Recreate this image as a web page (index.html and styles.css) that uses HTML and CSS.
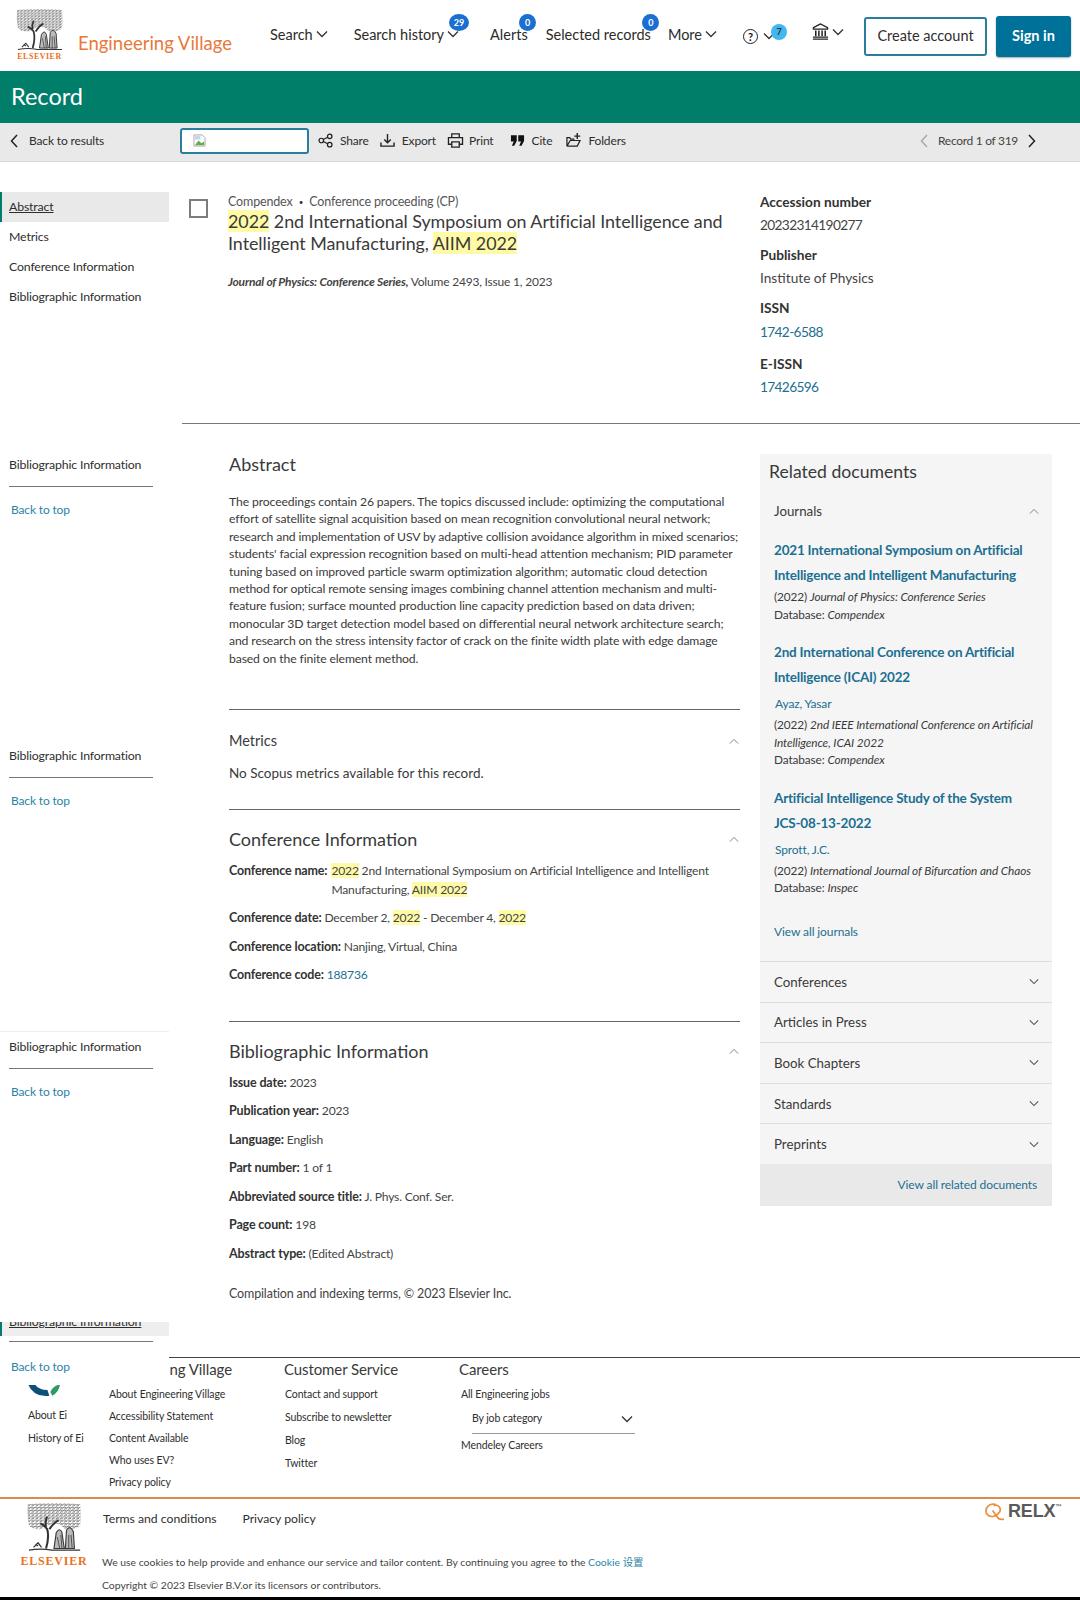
FILE: index.html
```html
<!DOCTYPE html>
<html lang="en">
<head>
<meta charset="utf-8">
<title>Engineering Village - Record</title>
<link rel="stylesheet" href="styles.css">
</head>
<body>
<svg class="defs" width="0" height="0" aria-hidden="true">
  <defs>
    <symbol id="chev-d" viewBox="0 0 12 8"><path d="M1 1.5 6 6.5 11 1.5" fill="none" stroke="currentColor" stroke-width="1.3"/></symbol>
    <symbol id="chev-u" viewBox="0 0 12 8"><path d="M1 6.5 6 1.5 11 6.5" fill="none" stroke="currentColor" stroke-width="1.1"/></symbol>
    <symbol id="chev-l" viewBox="0 0 8 14"><path d="M7 1 1.5 7 7 13" fill="none" stroke="currentColor" stroke-width="1.5"/></symbol>
    <symbol id="chev-r" viewBox="0 0 8 14"><path d="M1 1 6.5 7 1 13" fill="none" stroke="currentColor" stroke-width="1.5"/></symbol>
    <pattern id="leaf" width="3.6" height="2.8" patternUnits="userSpaceOnUse">
      <path d="M0 1.2 Q.8 0 1.6 1 T3.6 1 M.6 2.500 Q1.600 1.700 2.800 2.500" fill="none" stroke="#3f3f3f" stroke-width=".6"/>
    </pattern>
    <symbol id="tree" viewBox="0 0 48 44">
      <path d="M1 1 Q10 0 24 0 Q38 0 47 1 Q48 12 47 20 Q42 24 34 23 L29 19 Q22 16 16 22 Q8 25 2 20 Q0 10 1 1Z" fill="url(#leaf)"/>
      <path d="M17 40 Q20 30 18 23 Q16 20 12 18 M20 23 Q24 17 28 15 M17 21 Q16 16 18 12" fill="none" stroke="#333" stroke-width="1.8"/>
      <path d="M24 40 L26 26 Q29 21 31 26 L33 40Z M34 40 L35 24 Q38 19 41 25 L42 40Z" fill="#bbb" stroke="#3a3a3a" stroke-width="1"/>
      <path d="M27 30 29 40 M30 28 31 40 M37 28 37 40 M39 28 40 40" stroke="#444" stroke-width=".8"/>
      <path d="M2 41.500 Q12 39.500 22 41.500 L47 41.500 M6 39 10 35 13 39 M8 36 10 38" fill="none" stroke="#333" stroke-width="1.1"/>
    </symbol>
  </defs>
</svg>

<header class="topbar">
  <a class="brand">
    <span class="logo">
      <svg class="tree" viewBox="0 0 48 44"><use href="#tree"/></svg>
      <span class="wordmark">ELSEVIER</span>
    </span>
    <span class="brand-name">Engineering Village</span>
  </a>
  <nav class="mainnav">
    <a class="nav-item nav-search">Search<svg class="ch"><use href="#chev-d"/></svg></a>
    <a class="nav-item nav-history">Search history<svg class="ch"><use href="#chev-d"/></svg><span class="badge badge-lg">29</span></a>
    <a class="nav-item nav-alerts">Alerts<span class="badge">0</span></a>
    <a class="nav-item nav-selected">Selected records<span class="badge">0</span></a>
    <a class="nav-item nav-more">More<svg class="ch"><use href="#chev-d"/></svg></a>
    <a class="nav-item nav-help"><span class="help">?</span><svg class="ch"><use href="#chev-d"/></svg><span class="badge badge-sky">7</span></a>
    <a class="nav-item nav-bank">
      <svg class="bank" viewBox="0 0 18 18"><path d="M9 1 1.500 5V6.500h15V5Z" fill="none" stroke="#222" stroke-width="1.400"/><path d="M4 8v6M7.300 8v6M10.700 8v6M14 8v6" stroke="#222" stroke-width="1.600"/><path d="M1 15h16M1 17h16" stroke="#222" stroke-width="1.400"/></svg>
      <svg class="ch"><use href="#chev-d"/></svg>
    </a>
  </nav>
  <div class="auth">
    <a class="btn btn-outline">Create account</a>
    <a class="btn btn-solid">Sign in</a>
  </div>
</header>

<div class="band">Record</div>

<div class="toolbar">
  <a class="tool tool-back"><svg class="tchev"><use href="#chev-l"/></svg>Back to results</a>
  <div class="fakeinput">
    <svg class="broken" viewBox="0 0 14 14"><path d="M1 1h9l3 3v9H1Z" fill="#fff" stroke="#a9a9a9"/><path d="M2 12 6 7l3 3 3-2v4Z" fill="#5fae4c"/><path d="M2 2h6v4H2Z" fill="#c5d5ee"/></svg>
  </div>
  <div class="tools">
    <a class="tool"><svg class="ticon" viewBox="0 0 16 16"><circle cx="3.500" cy="8" r="2.400" fill="none" stroke="#222" stroke-width="1.300"/><circle cx="12.500" cy="3.500" r="2.400" fill="none" stroke="#222" stroke-width="1.300"/><circle cx="12.500" cy="12.500" r="2.400" fill="none" stroke="#222" stroke-width="1.300"/><path d="M5.700 7 10.300 4.600M5.700 9 10.300 11.400" stroke="#222" stroke-width="1.300"/></svg>Share</a>
    <a class="tool"><svg class="ticon" viewBox="0 0 16 16"><path d="M8 1v9M4.500 7 8 10.500 11.500 7" fill="none" stroke="#222" stroke-width="1.500"/><path d="M1 10v4h14v-4" fill="none" stroke="#222" stroke-width="1.500"/></svg>Export</a>
    <a class="tool"><svg class="ticon ticon-lg" viewBox="0 0 18 16"><path d="M5 5V1h8v4M5 12H1.500V5h15v7H13" fill="none" stroke="#222" stroke-width="1.400"/><path d="M5 9.500h8V15H5Z" fill="none" stroke="#222" stroke-width="1.400"/></svg>Print</a>
    <a class="tool tool-cite"><svg class="ticon" viewBox="0 0 16 16"><path d="M1 2.500h6.200v6L4.500 13.500H2L4 9H1ZM8.800 2.500H15v6L12.300 13.500H9.800L11.800 9h-3Z" fill="#111"/></svg>Cite</a>
    <a class="tool"><svg class="ticon" viewBox="0 0 16 16"><path d="M1 14V5h3l1 1.500h4M1 14h11l3-6H4.500L1 14" fill="none" stroke="#222" stroke-width="1.300"/><path d="M12 0v6.500M8.800 3.300h6.400" stroke="#222" stroke-width="1.500"/></svg>Folders</a>
  </div>
  <div class="pager">
    <svg class="tchev tchev-off"><use href="#chev-l"/></svg>
    <span>Record 1 of 319</span>
    <svg class="tchev"><use href="#chev-r"/></svg>
  </div>
</div>

<div class="layout">
  <aside class="rail">
    <ul class="railnav">
      <li class="railnav-item is-active">Abstract</li>
      <li class="railnav-item">Metrics</li>
      <li class="railnav-item">Conference Information</li>
      <li class="railnav-item">Bibliographic Information</li>
    </ul>
    <section class="rail-block">
      <div class="rail-title">Bibliographic Information</div>
      <a class="rail-top">Back to top</a>
    </section>
    <section class="rail-block">
      <div class="rail-title">Bibliographic Information</div>
      <a class="rail-top">Back to top</a>
    </section>
    <section class="rail-block rail-block-edge">
      <div class="rail-title">Bibliographic Information</div>
      <a class="rail-top">Back to top</a>
    </section>
    <section class="rail-last">
      <div class="rail-clip"><span>Bibliographic Information</span></div>
      <div class="rail-rule"></div>
      <a class="rail-top">Back to top</a>
    </section>
  </aside>

  <main class="content">
    <section class="record-head">
      <span class="checkbox"></span>
      <div class="record-main">
        <div class="record-type">Compendex <span class="dot">•</span> Conference proceeding (CP)</div>
        <h1 class="record-title"><mark>2022</mark> 2nd International Symposium on Artificial Intelligence and Intelligent Manufacturing, <mark>AIIM 2022</mark></h1>
        <p class="record-source"><b><i>Journal of Physics: Conference Series,</i></b> Volume 2493, Issue 1, 2023</p>
      </div>
      <dl class="record-meta">
        <dt>Accession number</dt><dd class="num">20232314190277</dd>
        <dt>Publisher</dt><dd>Institute of Physics</dd>
        <dt>ISSN</dt><dd class="link num">1742-6588</dd>
        <dt>E-ISSN</dt><dd class="link num">17426596</dd>
      </dl>
    </section>

    <div class="columns">
      <div class="article">
        <section class="sec sec-abstract">
          <h2 class="sec-title">Abstract</h2>
          <p class="abstract">The proceedings contain 26 papers. The topics discussed include: optimizing the computational<br>effort of satellite signal acquisition based on mean recognition convolutional neural network;<br>research and implementation of USV by adaptive collision avoidance algorithm in mixed scenarios;<br>students' facial expression recognition based on multi-head attention mechanism; PID parameter<br>tuning based on improved particle swarm optimization algorithm; automatic cloud detection<br>method for optical remote sensing images combining channel attention mechanism and multi-<br>feature fusion; surface mounted production line capacity prediction based on data driven;<br>monocular 3D target detection model based on differential neural network architecture search;<br>and research on the stress intensity factor of crack on the finite width plate with edge damage<br>based on the finite element method.</p>
        </section>
        <section class="sec sec-metrics">
          <div class="sec-row"><h3 class="sec-small">Metrics</h3><svg class="up"><use href="#chev-u"/></svg></div>
          <p class="noscopus">No Scopus metrics available for this record.</p>
        </section>
        <section class="sec sec-conf">
          <div class="sec-row"><h2 class="sec-title">Conference Information</h2><svg class="up"><use href="#chev-u"/></svg></div>
          <div class="kv kv-hang"><b>Conference name:</b> <span><mark>2022</mark> 2nd International Symposium on Artificial Intelligence and Intelligent<br>Manufacturing, <mark>AIIM 2022</mark></span></div>
          <div class="kv"><b>Conference date:</b> December 2, <mark>2022</mark> - December 4, <mark>2022</mark></div>
          <div class="kv"><b>Conference location:</b> Nanjing, Virtual, China</div>
          <div class="kv"><b>Conference code:</b> <a class="link">188736</a></div>
        </section>
        <section class="sec sec-bib">
          <div class="sec-row"><h2 class="sec-title">Bibliographic Information</h2><svg class="up"><use href="#chev-u"/></svg></div>
          <div class="kv"><b>Issue date:</b> 2023</div>
          <div class="kv"><b>Publication year:</b> 2023</div>
          <div class="kv"><b>Language:</b> English</div>
          <div class="kv"><b>Part number:</b> 1 of 1</div>
          <div class="kv"><b>Abbreviated source title:</b> J. Phys. Conf. Ser.</div>
          <div class="kv"><b>Page count:</b> 198</div>
          <div class="kv"><b>Abstract type:</b> (Edited Abstract)</div>
          <p class="indexing">Compilation and indexing terms, © 2023 Elsevier Inc.</p>
        </section>
      </div>

      <aside class="related">
        <h2 class="related-title">Related documents</h2>
        <div class="acc-head acc-open"><span>Journals</span><svg class="up"><use href="#chev-u"/></svg></div>
        <div class="docs">
          <article class="doc">
            <a class="doc-title">2021 International Symposium on Artificial<br>Intelligence and Intelligent Manufacturing</a>
            <p class="doc-info">(2022) <i>Journal of Physics: Conference Series</i><br>Database: <i>Compendex</i></p>
          </article>
          <article class="doc">
            <a class="doc-title">2nd International Conference on Artificial<br>Intelligence (ICAI) 2022</a>
            <a class="doc-author">Ayaz, Yasar</a>
            <p class="doc-info">(2022) <i>2nd IEEE International Conference on Artificial<br>Intelligence, ICAI 2022</i><br>Database: <i>Compendex</i></p>
          </article>
          <article class="doc">
            <a class="doc-title">Artificial Intelligence Study of the System<br>JCS-08-13-2022</a>
            <a class="doc-author">Sprott, J.C.</a>
            <p class="doc-info">(2022) <i>International Journal of Bifurcation and Chaos</i><br>Database: <i>Inspec</i></p>
          </article>
          <a class="viewall">View all journals</a>
        </div>
        <div class="acc-head"><span>Conferences</span><svg class="up down"><use href="#chev-d"/></svg></div>
        <div class="acc-head"><span>Articles in Press</span><svg class="up down"><use href="#chev-d"/></svg></div>
        <div class="acc-head"><span>Book Chapters</span><svg class="up down"><use href="#chev-d"/></svg></div>
        <div class="acc-head"><span>Standards</span><svg class="up down"><use href="#chev-d"/></svg></div>
        <div class="acc-head"><span>Preprints</span><svg class="up down"><use href="#chev-d"/></svg></div>
        <div class="related-foot"><a>View all related documents</a></div>
      </aside>
    </div>
  </main>
</div>

<footer class="footer">
  <div class="foot-links">
    <div class="foot-col foot-ei">
      <svg class="ei" viewBox="0 0 34 13"><path d="M0 0H7Q11 6 20 6L22 12Q6 14 0 0Z" fill="#0d4f79"/><path d="M23 8Q25 2 33 0Q32 8 25 12Z" fill="#2f9a63"/></svg>
      <a>About Ei</a>
      <a>History of Ei</a>
    </div>
    <div class="foot-col foot-ev">
      <h4 class="foot-h">Engineering Village</h4>
      <a>About Engineering Village</a>
      <a>Accessibility Statement</a>
      <a>Content Available</a>
      <a>Who uses EV?</a>
      <a>Privacy policy</a>
    </div>
    <div class="foot-col foot-cs">
      <h4 class="foot-h">Customer Service</h4>
      <a>Contact and support</a>
      <a>Subscribe to newsletter</a>
      <a>Blog</a>
      <a>Twitter</a>
    </div>
    <div class="foot-col foot-car">
      <h4 class="foot-h">Careers</h4>
      <a>All Engineering jobs</a>
      <div class="select"><span>By job category</span><svg class="ch"><use href="#chev-d"/></svg></div>
      <a>Mendeley Careers</a>
    </div>
  </div>
  <div class="foot-legal">
    <div class="foot-logo">
      <svg class="tree-lg" viewBox="0 0 48 44"><use href="#tree"/></svg>
      <span class="wordmark wordmark-lg">ELSEVIER</span>
    </div>
    <div class="legal-text">
      <div class="legal-links"><a>Terms and conditions</a><a>Privacy policy</a></div>
      <p class="legal-cookie">We use cookies to help provide and enhance our service and tailor content. By continuing you agree to the <a class="cookie">Cookie 设置</a></p>
      <p class="legal-copy">Copyright © 2023 Elsevier B.V.or its licensors or contributors.</p>
    </div>
    <div class="relx">
      <svg class="relx-q" viewBox="0 0 22 20"><path d="M12 2.500C6 1 2 5 2 9.500S6 16 10 15C15 14 19 9 16 5Q13 2 10 4M9 9 14 16Q16 19 21 18" fill="none" stroke="#e8903c" stroke-width="1.800"/></svg>
      <span class="relx-word">RELX</span><span class="tm">™</span>
    </div>
  </div>
</footer>
<div class="blackbar"></div>
</body>
</html>
```
FILE: styles.css
```css
* { box-sizing: border-box; }
html, body { margin: 0; padding: 0; }
body {
  width: 1080px;
  height: 1600px;
  overflow: hidden;
  background: #fff;
  color: #2e2e2e;
  font-family: Lato, "Open Sans", "Noto Sans CJK SC", sans-serif;
  font-size: 12.5px;
  letter-spacing: -.15px;
}
a { color: inherit; text-decoration: none; }
ul, dl, dd, p, h1, h2, h3, h4 { margin: 0; padding: 0; font-weight: 400; }
ul { list-style: none; }
mark { background: #fffaa6; color: inherit; }
.defs { display: block; height: 0; }
.link { color: #1c6f92; }

/* Header */
.topbar { display: flex; align-items: flex-start; height: 71px; }
.brand { display: flex; align-items: flex-end; width: 270px; flex: none; padding: 9px 0 0 16px; }
.logo { display: flex; flex-direction: column; align-items: center; width: 47px; }
.tree { width: 47px; height: 43px; display: block; }
.wordmark { font: 700 8px "Liberation Serif", serif; color: #e9711c; letter-spacing: .5px; line-height: 9px; }
.brand-name { color: #e8793a; font-size: 18.5px; line-height: 24px; margin-left: 15px; margin-bottom: 6px; letter-spacing: 0; }
.mainnav { display: flex; align-items: center; height: 71px; flex: none; width: 594px; }
.nav-item { position: relative; display: flex; align-items: center; font-size: 14.5px; line-height: 20px; height: 20px; margin-top: -2px; color: #2b2b2b; white-space: nowrap; letter-spacing: 0; }
.ch { width: 12px; height: 8px; color: #333; margin-left: 3px; margin-top: -2px; flex: none; }
.nav-search { margin-right: 26px; }
.nav-history { margin-right: 31px; }
.nav-alerts { margin-right: 18px; }
.nav-selected { margin-right: 17px; }
.nav-more { margin-right: 26px; }
.nav-help { margin-right: 37px; }
.nav-bank { margin-top: -8px; }
.badge { position: absolute; top: -11px; right: -8.5px; width: 17px; height: 17px; border-radius: 50%; background: #1a6fd0; color: #fff; font-size: 9px; font-weight: 700; line-height: 17px; text-align: center; }
.badge-lg { width: 20px; right: -10px; }
.badge-sky { background: #44b6ee; color: #234; top: -1px; right: -12px; width: 16px; height: 16px; line-height: 16px; }
.help { width: 15px; height: 15px; border: 1.3px solid #222; border-radius: 50%; font-size: 11px; line-height: 13px; text-align: center; margin-top: 3px; color: #111; font-weight: 700; }
.nav-help .ch { margin-left: 5px; margin-top: 3px; }
.bank { width: 17px; height: 17px; flex: none; }
.nav-bank .ch { margin-top: 0; }
.auth { display: flex; align-items: center; gap: 9px; padding-top: 16px; flex: none; }
.btn { display: flex; align-items: center; justify-content: center; font-size: 14.5px; border-radius: 3px; padding-bottom: 2px; letter-spacing: 0; }
.btn-outline { width: 123px; height: 39px; border: 2px solid #2b7d9e; color: #2e2e2e; }
.btn-solid { width: 75px; height: 41px; background: #00729a; color: #fff; font-weight: 700; box-shadow: 0 1px 2px rgba(0,0,0,.35); }

/* Band + toolbar */
.band { height: 52px; background: #007e69; color: #fff; font-size: 23.5px; line-height: 50px; padding-left: 11px; letter-spacing: 0; }
.toolbar { display: flex; align-items: center; height: 39px; padding-bottom: 3px; background: #e9e9e9; border-bottom: 1px solid #d9d9d9; font-size: 12px; }
.tool { display: flex; align-items: center; white-space: nowrap; }
.tool-back { width: 180px; padding-left: 10px; }
.tchev { width: 8px; height: 14px; color: #222; flex: none; }
.tool-back .tchev { margin-right: 11px; }
.fakeinput { width: 129px; height: 26px; background: #fff; border: 2px solid #2b7d9e; border-radius: 3px; padding: 4px 0 0 11px; flex: none; margin-top: 1px; }
.broken { width: 13px; height: 13px; display: block; }
.tools { display: flex; align-items: center; gap: 11px; margin-left: 9px; }
.tool-cite { margin-left: 5px; margin-right: 3px; }
.ticon { width: 15px; height: 15px; margin-right: 7px; flex: none; }
.ticon-lg { width: 17px; margin-right: 5px; }
.pager { display: flex; align-items: center; gap: 10px; margin-left: auto; margin-right: 44px; color: #444; font-size: 12px; letter-spacing: -.3px; }
.tchev-off { color: #aaa; }

/* Layout */
.layout { display: grid; grid-template-columns: 169px 911px; grid-template-rows: 1195px; height: 1195px; }
.rail { position: relative; z-index: 2; height: 1223px; background: #fff; padding-top: 30px; overflow: hidden; align-self: start; font-size: 12.3px; }
.railnav { height: 258px; }
.railnav-item { height: 30px; line-height: 30.500px; padding-left: 9px; }
.is-active { background: #e9e9e9; border-left: 2px solid #007e69; padding-left: 7px; text-decoration: underline; }
.rail-block { height: 291px; padding-top: 6px; }
.rail-block-edge { border-top: 1px solid #eee; margin-top: -1px; }
.rail-title { width: 144px; margin-left: 9px; height: 31px; line-height: 18px; border-bottom: 1px solid #777; }
.rail-top { display: block; margin: 14px 0 0 11px; color: #2a84a8; line-height: 18px; font-size: 12px; }
.rail-last { height: 63px; }
.rail-clip { width: 169px; height: 14px; background: #eee; border-left: 2px solid #007e69; overflow: hidden; padding-left: 7px; }
.rail-clip span { display: block; margin-top: -9px; line-height: 18px; text-decoration: underline; }
.rail-rule { width: 144px; margin: 5px 0 0 9px; border-top: 1px solid #777; }
.rail-last .rail-top { margin-top: 16px; }

.content { min-width: 0; }
.record-head { display: flex; height: 262px; margin-left: 13px; border-bottom: 1px solid #777; padding-top: 31px; }
.checkbox { width: 19px; height: 19px; border: 2px solid #7d7d7d; flex: none; margin: 6px 0 0 7px; }
.record-main { width: 522px; margin-left: 20px; flex: none; }
.record-type { line-height: 16px; color: #555; padding-top: 1px; }
.dot { margin: 0 3px; color: #333; font-size: 8px; vertical-align: 1px; }
.record-title { font-size: 17.9px; line-height: 22px; letter-spacing: -.05px; color: #3a3a3a; }
.record-source { margin-top: 20px; line-height: 16px; color: #444; font-size: 12px; letter-spacing: -.2px; }
.record-meta { margin: -1px 0 0 10px; font-size: 13.7px; letter-spacing: 0; }
.record-meta dt { font-weight: 700; line-height: 20px; color: #333; }
.record-meta dd { line-height: 20px; margin: 3px 0 10px; color: #444; }
.record-meta dd.link { color: #1c6f92; margin-top: 3.5px; margin-bottom: 12px; }
.record-meta dd.num { letter-spacing: -.65px; }

.columns { display: flex; align-items: flex-start; padding-left: 60px; }
.article { width: 511px; flex: none; }
.sec-title { font-size: 18px; line-height: 24px; letter-spacing: 0; color: #3a3a3a; }
.sec-abstract { height: 286px; padding-top: 28px; border-bottom: 1px solid #666; }
.abstract { margin-top: 17px; line-height: 17.4px; font-size: 12.2px; letter-spacing: -.12px; color: #3a3a3a; white-space: nowrap; }
.sec-row { display: flex; justify-content: space-between; align-items: center; }
.up { width: 10px; height: 7px; color: #777; margin-right: 1px; flex: none; }
.sec-metrics { height: 100px; padding-top: 21px; border-bottom: 1px solid #666; }
.sec-small { font-size: 14.5px; line-height: 20px; color: #3a3a3a; letter-spacing: 0; }
.noscopus { font-size: 13.5px; margin-top: 12px; line-height: 20px; color: #3a3a3a; letter-spacing: 0; }
.sec-conf { height: 212px; padding-top: 17px; border-bottom: 1px solid #666; }
.sec-conf .kv:first-of-type { margin-top: 9px; }
.kv { line-height: 19px; margin-top: 9.5px; color: #444; font-size: 12.1px; letter-spacing: -.2px; }
.kv b { color: #333; font-size: 12.5px; letter-spacing: -.15px; }
.kv-hang { display: flex; gap: 4px; }
.kv-hang b { flex: none; }
.sec-bib { padding-top: 17px; }
.sec-bib .kv:first-of-type { margin-top: 5px; }
.indexing { margin-top: 21px; line-height: 19px; color: #444; }

.related { width: 292px; margin: 30px 0 0 20px; background: #f5f5f5; flex: none; }
.related-title { font-size: 17.6px; line-height: 24px; padding: 6px 0 0 9px; letter-spacing: 0; color: #3a3a3a; }
.acc-head { display: flex; justify-content: space-between; align-items: center; height: 40.6px; padding: 0 12px 0 14px; border-bottom: 1px solid #ddd; font-size: 13.3px; letter-spacing: 0; color: #3a3a3a; }
.acc-open { border-bottom: 0; height: 38px; margin-top: 8px; }
.down { color: #555; }
.docs { padding: 8px 14px 0; height: 432px; border-bottom: 1px solid #ddd; }
.doc { margin-bottom: 17px; }
.doc-title { display: block; color: #1c6f92; font-size: 13.5px; font-weight: 700; line-height: 25px; letter-spacing: -.2px; white-space: nowrap; }
.doc-author { display: block; color: #1c6f92; margin: 4px 0 3px 1px; line-height: 19px; font-size: 12px; }
.doc-info { font-size: 11.8px; line-height: 17.5px; color: #3a3a3a; white-space: nowrap; letter-spacing: -.1px; }
.viewall { display: block; color: #1c6f92; margin-top: 26px; line-height: 18px; font-size: 12px; letter-spacing: -.1px; }
.related-foot { height: 42px; background: #e9e9e9; text-align: right; padding: 12px 15px 0 0; line-height: 18px; color: #1c6f92; font-size: 12px; letter-spacing: -.1px; margin-top: -1px; }

/* Footer */
.footer { height: 240px; }
.foot-links { display: flex; height: 140px; position: relative; }
.foot-links::before { content: ""; position: absolute; left: 169px; right: 0; top: 0; border-top: 1px solid #444; }
.foot-col { display: flex; flex-direction: column; font-size: 10.5px; letter-spacing: -.1px; }
.foot-col a { line-height: 15px; height: 22.9px; white-space: nowrap; }
.foot-h { font-size: 15px; line-height: 20px; padding-top: 2px; box-sizing: content-box; height: 20px; margin-bottom: 8px; white-space: nowrap; color: #3a3a3a; letter-spacing: -.1px; }
.foot-ei { width: 109px; padding: 27px 0 0 28px; }
.ei { width: 33px; height: 13px; display: block; margin-bottom: 11px; }
.foot-ev { width: 175px; }
.foot-cs { width: 175px; }
.foot-cs a { margin-left: 1px; }
.foot-car { width: 180px; }
.foot-car a { margin-left: 2px; }
.select { display: flex; justify-content: space-between; align-items: center; width: 163px; height: 26px; margin: -2px 0 4px 13px; border-bottom: 1px solid #999; padding-bottom: 5px; }
.select .ch { margin-right: 2px; margin-top: 3px; }
.foot-legal { display: flex; border-top: 2px solid #d98a4f; height: 100px; position: relative; }
.foot-logo { display: flex; flex-direction: column; align-items: center; width: 58px; margin: 4px 0 0 25px; flex: none; }
.tree-lg { width: 58px; height: 50px; display: block; }
.wordmark-lg { font-size: 12px; line-height: 12px; letter-spacing: .8px; margin-top: 2px; }
.legal-text { margin-left: 19px; }
.legal-links { display: flex; gap: 26px; padding: 11px 0 0 1px; font-size: 12.2px; line-height: 18px; letter-spacing: 0; }
.legal-cookie { margin-top: 26px; font-size: 10.4px; line-height: 16px; color: #444; white-space: nowrap; letter-spacing: 0; }
.cookie { color: #2a84a8; font-family: Lato, "Noto Sans CJK SC", sans-serif; }
.legal-copy { margin-top: 7px; font-size: 10.4px; line-height: 16px; color: #444; letter-spacing: 0; }
.relx { position: absolute; top: 3px; left: 984px; display: flex; align-items: flex-start; }
.relx-q { width: 21px; height: 19px; }
.relx-word { font: 700 18px "Liberation Sans Narrow", "Liberation Sans", sans-serif; color: #5a5a5a; line-height: 18px; margin-left: 3px; }
.tm { font-size: 8px; color: #666; line-height: 10px; }
.blackbar { height: 3px; background: #000; }
```
